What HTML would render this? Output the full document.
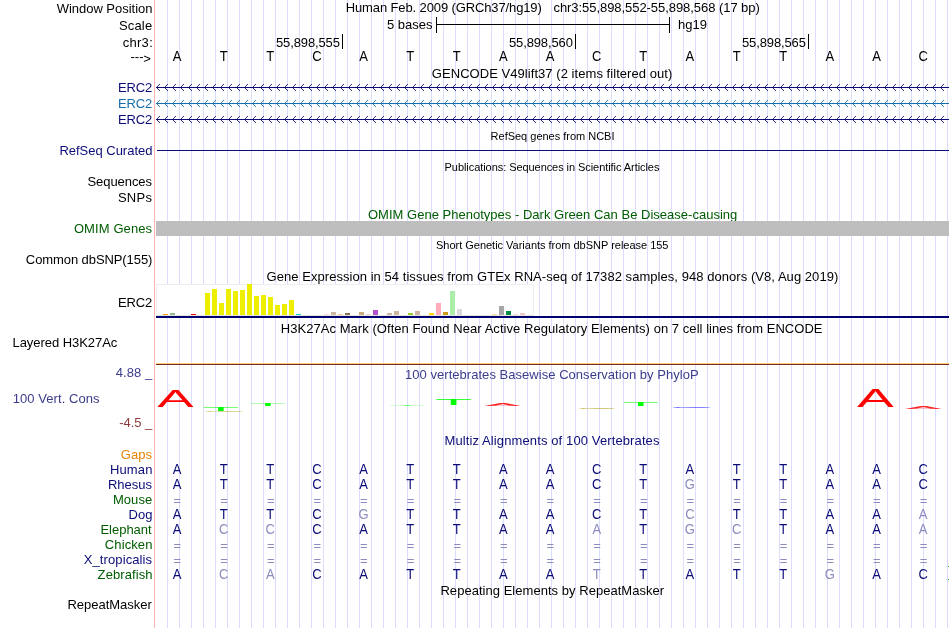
<!DOCTYPE html>
<html><head><meta charset="utf-8"><title>UCSC Genome Browser</title>
<style>
html,body{margin:0;padding:0;background:#fff;}
svg{display:block;font-family:"Liberation Sans", sans-serif;will-change:transform;}
</style></head><body>
<svg width="950" height="628" viewBox="0 0 950 628" shape-rendering="crispEdges">
<rect x="0" y="0" width="950" height="628" fill="#fff"/>
<rect x="167" y="0" width="1" height="628" fill="#dcdcff"/>
<rect x="179" y="0" width="1" height="628" fill="#dcdcff"/>
<rect x="191" y="0" width="1" height="628" fill="#dcdcff"/>
<rect x="203" y="0" width="1" height="628" fill="#dcdcff"/>
<rect x="215" y="0" width="1" height="628" fill="#dcdcff"/>
<rect x="227" y="0" width="1" height="628" fill="#dcdcff"/>
<rect x="239" y="0" width="1" height="628" fill="#dcdcff"/>
<rect x="251" y="0" width="1" height="628" fill="#dcdcff"/>
<rect x="263" y="0" width="1" height="628" fill="#dcdcff"/>
<rect x="275" y="0" width="1" height="628" fill="#dcdcff"/>
<rect x="287" y="0" width="1" height="628" fill="#dcdcff"/>
<rect x="299" y="0" width="1" height="628" fill="#dcdcff"/>
<rect x="311" y="0" width="1" height="628" fill="#dcdcff"/>
<rect x="323" y="0" width="1" height="628" fill="#dcdcff"/>
<rect x="335" y="0" width="1" height="628" fill="#dcdcff"/>
<rect x="347" y="0" width="1" height="628" fill="#dcdcff"/>
<rect x="359" y="0" width="1" height="628" fill="#dcdcff"/>
<rect x="371" y="0" width="1" height="628" fill="#dcdcff"/>
<rect x="383" y="0" width="1" height="628" fill="#dcdcff"/>
<rect x="395" y="0" width="1" height="628" fill="#dcdcff"/>
<rect x="407" y="0" width="1" height="628" fill="#dcdcff"/>
<rect x="419" y="0" width="1" height="628" fill="#dcdcff"/>
<rect x="431" y="0" width="1" height="628" fill="#dcdcff"/>
<rect x="443" y="0" width="1" height="628" fill="#dcdcff"/>
<rect x="455" y="0" width="1" height="628" fill="#dcdcff"/>
<rect x="467" y="0" width="1" height="628" fill="#dcdcff"/>
<rect x="479" y="0" width="1" height="628" fill="#dcdcff"/>
<rect x="491" y="0" width="1" height="628" fill="#dcdcff"/>
<rect x="503" y="0" width="1" height="628" fill="#dcdcff"/>
<rect x="515" y="0" width="1" height="628" fill="#dcdcff"/>
<rect x="527" y="0" width="1" height="628" fill="#dcdcff"/>
<rect x="539" y="0" width="1" height="628" fill="#dcdcff"/>
<rect x="551" y="0" width="1" height="628" fill="#dcdcff"/>
<rect x="563" y="0" width="1" height="628" fill="#dcdcff"/>
<rect x="575" y="0" width="1" height="628" fill="#dcdcff"/>
<rect x="587" y="0" width="1" height="628" fill="#dcdcff"/>
<rect x="599" y="0" width="1" height="628" fill="#dcdcff"/>
<rect x="611" y="0" width="1" height="628" fill="#dcdcff"/>
<rect x="623" y="0" width="1" height="628" fill="#dcdcff"/>
<rect x="635" y="0" width="1" height="628" fill="#dcdcff"/>
<rect x="647" y="0" width="1" height="628" fill="#dcdcff"/>
<rect x="659" y="0" width="1" height="628" fill="#dcdcff"/>
<rect x="671" y="0" width="1" height="628" fill="#dcdcff"/>
<rect x="683" y="0" width="1" height="628" fill="#dcdcff"/>
<rect x="695" y="0" width="1" height="628" fill="#dcdcff"/>
<rect x="707" y="0" width="1" height="628" fill="#dcdcff"/>
<rect x="719" y="0" width="1" height="628" fill="#dcdcff"/>
<rect x="731" y="0" width="1" height="628" fill="#dcdcff"/>
<rect x="743" y="0" width="1" height="628" fill="#dcdcff"/>
<rect x="755" y="0" width="1" height="628" fill="#dcdcff"/>
<rect x="767" y="0" width="1" height="628" fill="#dcdcff"/>
<rect x="779" y="0" width="1" height="628" fill="#dcdcff"/>
<rect x="791" y="0" width="1" height="628" fill="#dcdcff"/>
<rect x="803" y="0" width="1" height="628" fill="#dcdcff"/>
<rect x="815" y="0" width="1" height="628" fill="#dcdcff"/>
<rect x="827" y="0" width="1" height="628" fill="#dcdcff"/>
<rect x="839" y="0" width="1" height="628" fill="#dcdcff"/>
<rect x="851" y="0" width="1" height="628" fill="#dcdcff"/>
<rect x="863" y="0" width="1" height="628" fill="#dcdcff"/>
<rect x="875" y="0" width="1" height="628" fill="#dcdcff"/>
<rect x="887" y="0" width="1" height="628" fill="#dcdcff"/>
<rect x="899" y="0" width="1" height="628" fill="#dcdcff"/>
<rect x="911" y="0" width="1" height="628" fill="#dcdcff"/>
<rect x="923" y="0" width="1" height="628" fill="#dcdcff"/>
<rect x="935" y="0" width="1" height="628" fill="#dcdcff"/>
<rect x="947" y="0" width="1" height="628" fill="#dcdcff"/>
<rect x="154" y="0" width="1" height="628" fill="#ffb4b4"/>
<text x="56.65" y="12.8" font-size="13" text-anchor="start" fill="#000" textLength="95.80" lengthAdjust="spacing">Window Position</text>
<text x="118.9" y="29.6" font-size="13" text-anchor="start" fill="#000" textLength="33.27" lengthAdjust="spacing">Scale</text>
<text x="122.65" y="46.7" font-size="13" text-anchor="start" fill="#000" textLength="30.10" lengthAdjust="spacing">chr3:</text>
<text x="143.5" y="61.2" font-size="13" text-anchor="end" fill="#000">---</text>
<text x="150.8" y="62.6" font-size="13" text-anchor="end" fill="#000">&gt;</text>
<text x="345.75" y="11.9" font-size="13" text-anchor="start" fill="#000" textLength="196.04" lengthAdjust="spacing">Human Feb. 2009 (GRCh37/hg19)</text>
<text x="553.45" y="11.9" font-size="13" text-anchor="start" fill="#000" textLength="206.35" lengthAdjust="spacing">chr3:55,898,552-55,898,568 (17 bp)</text>
<text x="387.0" y="28.5" font-size="13" text-anchor="start" fill="#000" textLength="45.43" lengthAdjust="spacing">5 bases</text>
<rect x="437" y="24" width="233" height="1" fill="#000"/>
<rect x="436" y="17" width="1" height="16" fill="#000"/>
<rect x="669" y="17" width="1" height="16" fill="#000"/>
<text x="678.1" y="28.5" font-size="13" text-anchor="start" fill="#000" textLength="28.97" lengthAdjust="spacing">hg19</text>
<text x="276.0" y="46.8" font-size="13" text-anchor="start" fill="#000" textLength="63.91" lengthAdjust="spacing">55,898,555</text>
<rect x="342" y="34" width="1" height="15" fill="#000"/>
<text x="509.0" y="46.8" font-size="13" text-anchor="start" fill="#000" textLength="63.86" lengthAdjust="spacing">55,898,560</text>
<rect x="575" y="34" width="1" height="15" fill="#000"/>
<text x="742.0" y="46.8" font-size="13" text-anchor="start" fill="#000" textLength="63.91" lengthAdjust="spacing">55,898,565</text>
<rect x="808" y="34" width="1" height="15" fill="#000"/>
<text transform="translate(177.0 60.5) scale(1 1.08)" font-size="13" text-anchor="middle" fill="#000">A</text>
<text transform="translate(223.6 60.5) scale(1 1.08)" font-size="13" text-anchor="middle" fill="#000">T</text>
<text transform="translate(270.3 60.5) scale(1 1.08)" font-size="13" text-anchor="middle" fill="#000">T</text>
<text transform="translate(316.9 60.5) scale(1 1.08)" font-size="13" text-anchor="middle" fill="#000">C</text>
<text transform="translate(363.5 60.5) scale(1 1.08)" font-size="13" text-anchor="middle" fill="#000">A</text>
<text transform="translate(410.1 60.5) scale(1 1.08)" font-size="13" text-anchor="middle" fill="#000">T</text>
<text transform="translate(456.8 60.5) scale(1 1.08)" font-size="13" text-anchor="middle" fill="#000">T</text>
<text transform="translate(503.4 60.5) scale(1 1.08)" font-size="13" text-anchor="middle" fill="#000">A</text>
<text transform="translate(550.0 60.5) scale(1 1.08)" font-size="13" text-anchor="middle" fill="#000">A</text>
<text transform="translate(596.7 60.5) scale(1 1.08)" font-size="13" text-anchor="middle" fill="#000">C</text>
<text transform="translate(643.3 60.5) scale(1 1.08)" font-size="13" text-anchor="middle" fill="#000">T</text>
<text transform="translate(689.9 60.5) scale(1 1.08)" font-size="13" text-anchor="middle" fill="#000">A</text>
<text transform="translate(736.6 60.5) scale(1 1.08)" font-size="13" text-anchor="middle" fill="#000">T</text>
<text transform="translate(783.2 60.5) scale(1 1.08)" font-size="13" text-anchor="middle" fill="#000">T</text>
<text transform="translate(829.8 60.5) scale(1 1.08)" font-size="13" text-anchor="middle" fill="#000">A</text>
<text transform="translate(876.5 60.5) scale(1 1.08)" font-size="13" text-anchor="middle" fill="#000">A</text>
<text transform="translate(923.1 60.5) scale(1 1.08)" font-size="13" text-anchor="middle" fill="#000">C</text>
<text x="431.85" y="77.5" font-size="13" text-anchor="start" fill="#000" textLength="240.41" lengthAdjust="spacing">GENCODE V49lift37 (2 items filtered out)</text>
<text x="117.95" y="91.6" font-size="13" text-anchor="start" fill="#0c0c78" textLength="34.28" lengthAdjust="spacing">ERC2</text>
<rect x="156" y="87" width="793" height="1" fill="#0c0c78"/>
<path d="M160.0 84L156.5 87.5L160.0 91M168.0 84L164.5 87.5L168.0 91M176.0 84L172.5 87.5L176.0 91M184.0 84L180.5 87.5L184.0 91M192.0 84L188.5 87.5L192.0 91M200.0 84L196.5 87.5L200.0 91M208.0 84L204.5 87.5L208.0 91M216.0 84L212.5 87.5L216.0 91M224.0 84L220.5 87.5L224.0 91M232.0 84L228.5 87.5L232.0 91M240.0 84L236.5 87.5L240.0 91M248.0 84L244.5 87.5L248.0 91M256.0 84L252.5 87.5L256.0 91M264.0 84L260.5 87.5L264.0 91M272.0 84L268.5 87.5L272.0 91M280.0 84L276.5 87.5L280.0 91M288.0 84L284.5 87.5L288.0 91M296.0 84L292.5 87.5L296.0 91M304.0 84L300.5 87.5L304.0 91M312.0 84L308.5 87.5L312.0 91M320.0 84L316.5 87.5L320.0 91M328.0 84L324.5 87.5L328.0 91M336.0 84L332.5 87.5L336.0 91M344.0 84L340.5 87.5L344.0 91M352.0 84L348.5 87.5L352.0 91M360.0 84L356.5 87.5L360.0 91M368.0 84L364.5 87.5L368.0 91M376.0 84L372.5 87.5L376.0 91M384.0 84L380.5 87.5L384.0 91M392.0 84L388.5 87.5L392.0 91M400.0 84L396.5 87.5L400.0 91M408.0 84L404.5 87.5L408.0 91M416.0 84L412.5 87.5L416.0 91M424.0 84L420.5 87.5L424.0 91M432.0 84L428.5 87.5L432.0 91M440.0 84L436.5 87.5L440.0 91M448.0 84L444.5 87.5L448.0 91M456.0 84L452.5 87.5L456.0 91M464.0 84L460.5 87.5L464.0 91M472.0 84L468.5 87.5L472.0 91M480.0 84L476.5 87.5L480.0 91M488.0 84L484.5 87.5L488.0 91M496.0 84L492.5 87.5L496.0 91M504.0 84L500.5 87.5L504.0 91M512.0 84L508.5 87.5L512.0 91M520.0 84L516.5 87.5L520.0 91M528.0 84L524.5 87.5L528.0 91M536.0 84L532.5 87.5L536.0 91M544.0 84L540.5 87.5L544.0 91M552.0 84L548.5 87.5L552.0 91M560.0 84L556.5 87.5L560.0 91M568.0 84L564.5 87.5L568.0 91M576.0 84L572.5 87.5L576.0 91M584.0 84L580.5 87.5L584.0 91M592.0 84L588.5 87.5L592.0 91M600.0 84L596.5 87.5L600.0 91M608.0 84L604.5 87.5L608.0 91M616.0 84L612.5 87.5L616.0 91M624.0 84L620.5 87.5L624.0 91M632.0 84L628.5 87.5L632.0 91M640.0 84L636.5 87.5L640.0 91M648.0 84L644.5 87.5L648.0 91M656.0 84L652.5 87.5L656.0 91M664.0 84L660.5 87.5L664.0 91M672.0 84L668.5 87.5L672.0 91M680.0 84L676.5 87.5L680.0 91M688.0 84L684.5 87.5L688.0 91M696.0 84L692.5 87.5L696.0 91M704.0 84L700.5 87.5L704.0 91M712.0 84L708.5 87.5L712.0 91M720.0 84L716.5 87.5L720.0 91M728.0 84L724.5 87.5L728.0 91M736.0 84L732.5 87.5L736.0 91M744.0 84L740.5 87.5L744.0 91M752.0 84L748.5 87.5L752.0 91M760.0 84L756.5 87.5L760.0 91M768.0 84L764.5 87.5L768.0 91M776.0 84L772.5 87.5L776.0 91M784.0 84L780.5 87.5L784.0 91M792.0 84L788.5 87.5L792.0 91M800.0 84L796.5 87.5L800.0 91M808.0 84L804.5 87.5L808.0 91M816.0 84L812.5 87.5L816.0 91M824.0 84L820.5 87.5L824.0 91M832.0 84L828.5 87.5L832.0 91M840.0 84L836.5 87.5L840.0 91M848.0 84L844.5 87.5L848.0 91M856.0 84L852.5 87.5L856.0 91M864.0 84L860.5 87.5L864.0 91M872.0 84L868.5 87.5L872.0 91M880.0 84L876.5 87.5L880.0 91M888.0 84L884.5 87.5L888.0 91M896.0 84L892.5 87.5L896.0 91M904.0 84L900.5 87.5L904.0 91M912.0 84L908.5 87.5L912.0 91M920.0 84L916.5 87.5L920.0 91M928.0 84L924.5 87.5L928.0 91M936.0 84L932.5 87.5L936.0 91M944.0 84L940.5 87.5L944.0 91" fill="none" stroke="#0c0c78" stroke-width="0.85" shape-rendering="geometricPrecision"/>
<text x="117.95" y="107.6" font-size="13" text-anchor="start" fill="#1670b0" textLength="34.28" lengthAdjust="spacing">ERC2</text>
<rect x="156" y="103" width="793" height="1" fill="#1670b0"/>
<path d="M160.0 100L156.5 103.5L160.0 107M168.0 100L164.5 103.5L168.0 107M176.0 100L172.5 103.5L176.0 107M184.0 100L180.5 103.5L184.0 107M192.0 100L188.5 103.5L192.0 107M200.0 100L196.5 103.5L200.0 107M208.0 100L204.5 103.5L208.0 107M216.0 100L212.5 103.5L216.0 107M224.0 100L220.5 103.5L224.0 107M232.0 100L228.5 103.5L232.0 107M240.0 100L236.5 103.5L240.0 107M248.0 100L244.5 103.5L248.0 107M256.0 100L252.5 103.5L256.0 107M264.0 100L260.5 103.5L264.0 107M272.0 100L268.5 103.5L272.0 107M280.0 100L276.5 103.5L280.0 107M288.0 100L284.5 103.5L288.0 107M296.0 100L292.5 103.5L296.0 107M304.0 100L300.5 103.5L304.0 107M312.0 100L308.5 103.5L312.0 107M320.0 100L316.5 103.5L320.0 107M328.0 100L324.5 103.5L328.0 107M336.0 100L332.5 103.5L336.0 107M344.0 100L340.5 103.5L344.0 107M352.0 100L348.5 103.5L352.0 107M360.0 100L356.5 103.5L360.0 107M368.0 100L364.5 103.5L368.0 107M376.0 100L372.5 103.5L376.0 107M384.0 100L380.5 103.5L384.0 107M392.0 100L388.5 103.5L392.0 107M400.0 100L396.5 103.5L400.0 107M408.0 100L404.5 103.5L408.0 107M416.0 100L412.5 103.5L416.0 107M424.0 100L420.5 103.5L424.0 107M432.0 100L428.5 103.5L432.0 107M440.0 100L436.5 103.5L440.0 107M448.0 100L444.5 103.5L448.0 107M456.0 100L452.5 103.5L456.0 107M464.0 100L460.5 103.5L464.0 107M472.0 100L468.5 103.5L472.0 107M480.0 100L476.5 103.5L480.0 107M488.0 100L484.5 103.5L488.0 107M496.0 100L492.5 103.5L496.0 107M504.0 100L500.5 103.5L504.0 107M512.0 100L508.5 103.5L512.0 107M520.0 100L516.5 103.5L520.0 107M528.0 100L524.5 103.5L528.0 107M536.0 100L532.5 103.5L536.0 107M544.0 100L540.5 103.5L544.0 107M552.0 100L548.5 103.5L552.0 107M560.0 100L556.5 103.5L560.0 107M568.0 100L564.5 103.5L568.0 107M576.0 100L572.5 103.5L576.0 107M584.0 100L580.5 103.5L584.0 107M592.0 100L588.5 103.5L592.0 107M600.0 100L596.5 103.5L600.0 107M608.0 100L604.5 103.5L608.0 107M616.0 100L612.5 103.5L616.0 107M624.0 100L620.5 103.5L624.0 107M632.0 100L628.5 103.5L632.0 107M640.0 100L636.5 103.5L640.0 107M648.0 100L644.5 103.5L648.0 107M656.0 100L652.5 103.5L656.0 107M664.0 100L660.5 103.5L664.0 107M672.0 100L668.5 103.5L672.0 107M680.0 100L676.5 103.5L680.0 107M688.0 100L684.5 103.5L688.0 107M696.0 100L692.5 103.5L696.0 107M704.0 100L700.5 103.5L704.0 107M712.0 100L708.5 103.5L712.0 107M720.0 100L716.5 103.5L720.0 107M728.0 100L724.5 103.5L728.0 107M736.0 100L732.5 103.5L736.0 107M744.0 100L740.5 103.5L744.0 107M752.0 100L748.5 103.5L752.0 107M760.0 100L756.5 103.5L760.0 107M768.0 100L764.5 103.5L768.0 107M776.0 100L772.5 103.5L776.0 107M784.0 100L780.5 103.5L784.0 107M792.0 100L788.5 103.5L792.0 107M800.0 100L796.5 103.5L800.0 107M808.0 100L804.5 103.5L808.0 107M816.0 100L812.5 103.5L816.0 107M824.0 100L820.5 103.5L824.0 107M832.0 100L828.5 103.5L832.0 107M840.0 100L836.5 103.5L840.0 107M848.0 100L844.5 103.5L848.0 107M856.0 100L852.5 103.5L856.0 107M864.0 100L860.5 103.5L864.0 107M872.0 100L868.5 103.5L872.0 107M880.0 100L876.5 103.5L880.0 107M888.0 100L884.5 103.5L888.0 107M896.0 100L892.5 103.5L896.0 107M904.0 100L900.5 103.5L904.0 107M912.0 100L908.5 103.5L912.0 107M920.0 100L916.5 103.5L920.0 107M928.0 100L924.5 103.5L928.0 107M936.0 100L932.5 103.5L936.0 107M944.0 100L940.5 103.5L944.0 107" fill="none" stroke="#1670b0" stroke-width="0.85" shape-rendering="geometricPrecision"/>
<text x="117.95" y="123.6" font-size="13" text-anchor="start" fill="#0c0c78" textLength="34.28" lengthAdjust="spacing">ERC2</text>
<rect x="156" y="119" width="793" height="1" fill="#0c0c78"/>
<path d="M160.0 116L156.5 119.5L160.0 123M168.0 116L164.5 119.5L168.0 123M176.0 116L172.5 119.5L176.0 123M184.0 116L180.5 119.5L184.0 123M192.0 116L188.5 119.5L192.0 123M200.0 116L196.5 119.5L200.0 123M208.0 116L204.5 119.5L208.0 123M216.0 116L212.5 119.5L216.0 123M224.0 116L220.5 119.5L224.0 123M232.0 116L228.5 119.5L232.0 123M240.0 116L236.5 119.5L240.0 123M248.0 116L244.5 119.5L248.0 123M256.0 116L252.5 119.5L256.0 123M264.0 116L260.5 119.5L264.0 123M272.0 116L268.5 119.5L272.0 123M280.0 116L276.5 119.5L280.0 123M288.0 116L284.5 119.5L288.0 123M296.0 116L292.5 119.5L296.0 123M304.0 116L300.5 119.5L304.0 123M312.0 116L308.5 119.5L312.0 123M320.0 116L316.5 119.5L320.0 123M328.0 116L324.5 119.5L328.0 123M336.0 116L332.5 119.5L336.0 123M344.0 116L340.5 119.5L344.0 123M352.0 116L348.5 119.5L352.0 123M360.0 116L356.5 119.5L360.0 123M368.0 116L364.5 119.5L368.0 123M376.0 116L372.5 119.5L376.0 123M384.0 116L380.5 119.5L384.0 123M392.0 116L388.5 119.5L392.0 123M400.0 116L396.5 119.5L400.0 123M408.0 116L404.5 119.5L408.0 123M416.0 116L412.5 119.5L416.0 123M424.0 116L420.5 119.5L424.0 123M432.0 116L428.5 119.5L432.0 123M440.0 116L436.5 119.5L440.0 123M448.0 116L444.5 119.5L448.0 123M456.0 116L452.5 119.5L456.0 123M464.0 116L460.5 119.5L464.0 123M472.0 116L468.5 119.5L472.0 123M480.0 116L476.5 119.5L480.0 123M488.0 116L484.5 119.5L488.0 123M496.0 116L492.5 119.5L496.0 123M504.0 116L500.5 119.5L504.0 123M512.0 116L508.5 119.5L512.0 123M520.0 116L516.5 119.5L520.0 123M528.0 116L524.5 119.5L528.0 123M536.0 116L532.5 119.5L536.0 123M544.0 116L540.5 119.5L544.0 123M552.0 116L548.5 119.5L552.0 123M560.0 116L556.5 119.5L560.0 123M568.0 116L564.5 119.5L568.0 123M576.0 116L572.5 119.5L576.0 123M584.0 116L580.5 119.5L584.0 123M592.0 116L588.5 119.5L592.0 123M600.0 116L596.5 119.5L600.0 123M608.0 116L604.5 119.5L608.0 123M616.0 116L612.5 119.5L616.0 123M624.0 116L620.5 119.5L624.0 123M632.0 116L628.5 119.5L632.0 123M640.0 116L636.5 119.5L640.0 123M648.0 116L644.5 119.5L648.0 123M656.0 116L652.5 119.5L656.0 123M664.0 116L660.5 119.5L664.0 123M672.0 116L668.5 119.5L672.0 123M680.0 116L676.5 119.5L680.0 123M688.0 116L684.5 119.5L688.0 123M696.0 116L692.5 119.5L696.0 123M704.0 116L700.5 119.5L704.0 123M712.0 116L708.5 119.5L712.0 123M720.0 116L716.5 119.5L720.0 123M728.0 116L724.5 119.5L728.0 123M736.0 116L732.5 119.5L736.0 123M744.0 116L740.5 119.5L744.0 123M752.0 116L748.5 119.5L752.0 123M760.0 116L756.5 119.5L760.0 123M768.0 116L764.5 119.5L768.0 123M776.0 116L772.5 119.5L776.0 123M784.0 116L780.5 119.5L784.0 123M792.0 116L788.5 119.5L792.0 123M800.0 116L796.5 119.5L800.0 123M808.0 116L804.5 119.5L808.0 123M816.0 116L812.5 119.5L816.0 123M824.0 116L820.5 119.5L824.0 123M832.0 116L828.5 119.5L832.0 123M840.0 116L836.5 119.5L840.0 123M848.0 116L844.5 119.5L848.0 123M856.0 116L852.5 119.5L856.0 123M864.0 116L860.5 119.5L864.0 123M872.0 116L868.5 119.5L872.0 123M880.0 116L876.5 119.5L880.0 123M888.0 116L884.5 119.5L888.0 123M896.0 116L892.5 119.5L896.0 123M904.0 116L900.5 119.5L904.0 123M912.0 116L908.5 119.5L912.0 123M920.0 116L916.5 119.5L920.0 123M928.0 116L924.5 119.5L928.0 123M936.0 116L932.5 119.5L936.0 123M944.0 116L940.5 119.5L944.0 123" fill="none" stroke="#0c0c78" stroke-width="0.85" shape-rendering="geometricPrecision"/>
<text x="490.6" y="140" font-size="11" text-anchor="start" fill="#000" textLength="123.91" lengthAdjust="spacing">RefSeq genes from NCBI</text>
<text x="59.45" y="155" font-size="13" text-anchor="start" fill="#0c0c78" textLength="92.97" lengthAdjust="spacing">RefSeq Curated</text>
<rect x="157" y="150" width="792" height="1" fill="#0c0c78"/>
<text x="444.6" y="171" font-size="11" text-anchor="start" fill="#000" textLength="214.82" lengthAdjust="spacing">Publications: Sequences in Scientific Articles</text>
<text x="87.4" y="186" font-size="13" text-anchor="start" fill="#000" textLength="64.65" lengthAdjust="spacing">Sequences</text>
<text x="117.9" y="202" font-size="13" text-anchor="start" fill="#000" textLength="34.13" lengthAdjust="spacing">SNPs</text>
<text x="367.9" y="218.5" font-size="13" text-anchor="start" fill="#005c00" textLength="369.44" lengthAdjust="spacing">OMIM Gene Phenotypes - Dark Green Can Be Disease-causing</text>
<text x="73.9" y="233" font-size="13" text-anchor="start" fill="#005c00" textLength="78.14" lengthAdjust="spacing">OMIM Genes</text>
<rect x="156" y="221" width="793" height="15" fill="#bebebe"/>
<text x="436.0" y="249" font-size="11" text-anchor="start" fill="#000" textLength="232.47" lengthAdjust="spacing">Short Genetic Variants from dbSNP release 155</text>
<text x="25.85" y="263.5" font-size="13" text-anchor="start" fill="#000" textLength="126.53" lengthAdjust="spacing">Common dbSNP(155)</text>
<text x="266.55" y="280.5" font-size="13" text-anchor="start" fill="#000" textLength="571.73" lengthAdjust="spacing">Gene Expression in 54 tissues from GTEx RNA-seq of 17382 samples, 948 donors (V8, Aug 2019)</text>
<text x="117.95" y="307" font-size="13" text-anchor="start" fill="#000" textLength="34.28" lengthAdjust="spacing">ERC2</text>
<rect x="156" y="284" width="378" height="32" fill="#eeeeee"/>
<rect x="157" y="285" width="376" height="30" fill="#fff"/>
<rect x="156" y="315" width="378" height="1" fill="#e6e6dc"/>
<rect x="163" y="314" width="5" height="1" fill="#f5a00a"/>
<rect x="170" y="313" width="5" height="2" fill="#8fbc8f"/>
<rect x="191" y="314" width="5" height="1" fill="#ff0000"/>
<rect x="205" y="293" width="5" height="22" fill="#eeee00"/>
<rect x="212" y="289" width="5" height="26" fill="#eeee00"/>
<rect x="219" y="303" width="5" height="12" fill="#eeee00"/>
<rect x="226" y="289" width="5" height="26" fill="#eeee00"/>
<rect x="233" y="291" width="5" height="24" fill="#eeee00"/>
<rect x="240" y="290" width="5" height="25" fill="#eeee00"/>
<rect x="247" y="284" width="5" height="31" fill="#eeee00"/>
<rect x="254" y="296" width="5" height="19" fill="#eeee00"/>
<rect x="261" y="295" width="5" height="20" fill="#eeee00"/>
<rect x="268" y="297" width="5" height="18" fill="#eeee00"/>
<rect x="275" y="305" width="5" height="10" fill="#eeee00"/>
<rect x="282" y="304" width="5" height="11" fill="#eeee00"/>
<rect x="289" y="300" width="5" height="15" fill="#eeee00"/>
<rect x="296" y="314" width="5" height="1" fill="#00cdcd"/>
<rect x="324" y="314" width="5" height="1" fill="#ffd7d7"/>
<rect x="331" y="312" width="5" height="3" fill="#cdb79e"/>
<rect x="338" y="314" width="5" height="1" fill="#f5c896"/>
<rect x="345" y="313" width="5" height="2" fill="#8b7355"/>
<rect x="359" y="312" width="5" height="3" fill="#cdaa7d"/>
<rect x="366" y="314" width="5" height="1" fill="#ffd2d2"/>
<rect x="373" y="310" width="5" height="5" fill="#b452cd"/>
<rect x="387" y="313" width="5" height="2" fill="#cdb79e"/>
<rect x="394" y="311" width="5" height="4" fill="#cdb79e"/>
<rect x="408" y="313" width="5" height="2" fill="#9acd32"/>
<rect x="415" y="311" width="5" height="4" fill="#cdb79e"/>
<rect x="429" y="313" width="5" height="2" fill="#ffd700"/>
<rect x="436" y="303" width="5" height="12" fill="#ffaeb9"/>
<rect x="443" y="312" width="5" height="3" fill="#cd9b1d"/>
<rect x="450" y="291" width="5" height="24" fill="#aaeeaa"/>
<rect x="457" y="309" width="5" height="6" fill="#d9d9d9"/>
<rect x="492" y="314" width="5" height="1" fill="#ffd39b"/>
<rect x="499" y="306" width="5" height="9" fill="#a6a6a6"/>
<rect x="506" y="311" width="5" height="4" fill="#008b45"/>
<rect x="513" y="314" width="5" height="1" fill="#ffd7d7"/>
<rect x="520" y="313" width="5" height="2" fill="#f0c8c8"/>
<rect x="156" y="316" width="793" height="2" fill="#000070"/>
<text x="280.75" y="332.9" font-size="13" text-anchor="start" fill="#000" textLength="541.79" lengthAdjust="spacing">H3K27Ac Mark (Often Found Near Active Regulatory Elements) on 7 cell lines from ENCODE</text>
<text x="12.45" y="346.8" font-size="13" text-anchor="start" fill="#000" textLength="104.91" lengthAdjust="spacing">Layered H3K27Ac</text>
<rect x="156" y="363" width="793" height="1" fill="#ffd070"/>
<rect x="156" y="364" width="793" height="1" fill="#782828"/>
<text x="405.0" y="378.5" font-size="13" text-anchor="start" fill="#3c3c8c" textLength="293.68" lengthAdjust="spacing">100 vertebrates Basewise Conservation by PhyloP</text>
<text x="115.7" y="377.3" font-size="13" text-anchor="start" fill="#3c3c8c" textLength="36.54" lengthAdjust="spacing">4.88 _</text>
<text x="12.8" y="402.5" font-size="13" text-anchor="start" fill="#3c3c8c" textLength="86.65" lengthAdjust="spacing">100 Vert. Cons</text>
<text x="119.25" y="427.2" font-size="13" text-anchor="start" fill="#8c3c3c" textLength="32.99" lengthAdjust="spacing">-4.5 _</text>
<text transform="translate(157.186 407.000) scale(2.2704 1.0174)" x="0" y="0" font-size="24.0" fill="#ff0000" opacity="1" shape-rendering="geometricPrecision">A</text>
<text transform="translate(202.204 411.000) scale(2.5387 0.2422)" x="0" y="0" font-size="24.0" fill="#00ff00" opacity="1" shape-rendering="geometricPrecision">T</text>
<text transform="translate(202.134 412.374) scale(2.3885 0.0938)" x="0" y="0" font-size="24.0" fill="#a89800" opacity="0.8" shape-rendering="geometricPrecision">G</text>
<text transform="translate(249.636 406.000) scale(2.4797 0.1817)" x="0" y="0" font-size="24.0" fill="#00ff00" opacity="1" shape-rendering="geometricPrecision">T</text>
<text transform="translate(389.120 405.500) scale(2.5092 0.0606)" x="0" y="0" font-size="24.0" fill="#00ff00" opacity="0.6" shape-rendering="geometricPrecision">T</text>
<text transform="translate(435.100 405.000) scale(2.5461 0.3937)" x="0" y="0" font-size="24.0" fill="#00ff00" opacity="1" shape-rendering="geometricPrecision">T</text>
<text transform="translate(484.387 405.750) scale(2.2642 0.1120)" x="0" y="0" font-size="24.0" fill="#ff0000" opacity="0.85" shape-rendering="geometricPrecision">A</text>
<text transform="translate(576.279 408.873) scale(2.2675 0.0996)" x="0" y="0" font-size="24.0" fill="#a89800" opacity="1" shape-rendering="geometricPrecision">G</text>
<text transform="translate(622.428 405.800) scale(2.4945 0.2301)" x="0" y="0" font-size="24.0" fill="#00ff00" opacity="1" shape-rendering="geometricPrecision">T</text>
<text transform="translate(669.984 408.081) scale(2.5132 0.0703)" x="0" y="0" font-size="24.0" fill="#0000ff" opacity="1" shape-rendering="geometricPrecision">C</text>
<text transform="translate(857.085 407.400) scale(2.3019 1.0417)" x="0" y="0" font-size="24.0" fill="#ff0000" opacity="1" shape-rendering="geometricPrecision">A</text>
<text transform="translate(904.885 409.050) scale(2.2956 0.1120)" x="0" y="0" font-size="24.0" fill="#ff0000" opacity="0.85" shape-rendering="geometricPrecision">A</text>
<text x="444.45" y="444.5" font-size="13" text-anchor="start" fill="#0c0c78" textLength="215.00" lengthAdjust="spacing">Multiz Alignments of 100 Vertebrates</text>
<text x="120.85" y="458.5" font-size="13" text-anchor="start" fill="#e8820a" textLength="31.22" lengthAdjust="spacing">Gaps</text>
<text x="109.95" y="473.5" font-size="13" text-anchor="start" fill="#0c0c78" textLength="42.46" lengthAdjust="spacing">Human</text>
<text transform="translate(177.0 473.5) scale(1 1.08)" font-size="13" text-anchor="middle" fill="#0c0c78">A</text>
<text transform="translate(223.6 473.5) scale(1 1.08)" font-size="13" text-anchor="middle" fill="#0c0c78">T</text>
<text transform="translate(270.3 473.5) scale(1 1.08)" font-size="13" text-anchor="middle" fill="#0c0c78">T</text>
<text transform="translate(316.9 473.5) scale(1 1.08)" font-size="13" text-anchor="middle" fill="#0c0c78">C</text>
<text transform="translate(363.5 473.5) scale(1 1.08)" font-size="13" text-anchor="middle" fill="#0c0c78">A</text>
<text transform="translate(410.1 473.5) scale(1 1.08)" font-size="13" text-anchor="middle" fill="#0c0c78">T</text>
<text transform="translate(456.8 473.5) scale(1 1.08)" font-size="13" text-anchor="middle" fill="#0c0c78">T</text>
<text transform="translate(503.4 473.5) scale(1 1.08)" font-size="13" text-anchor="middle" fill="#0c0c78">A</text>
<text transform="translate(550.0 473.5) scale(1 1.08)" font-size="13" text-anchor="middle" fill="#0c0c78">A</text>
<text transform="translate(596.7 473.5) scale(1 1.08)" font-size="13" text-anchor="middle" fill="#0c0c78">C</text>
<text transform="translate(643.3 473.5) scale(1 1.08)" font-size="13" text-anchor="middle" fill="#0c0c78">T</text>
<text transform="translate(689.9 473.5) scale(1 1.08)" font-size="13" text-anchor="middle" fill="#0c0c78">A</text>
<text transform="translate(736.6 473.5) scale(1 1.08)" font-size="13" text-anchor="middle" fill="#0c0c78">T</text>
<text transform="translate(783.2 473.5) scale(1 1.08)" font-size="13" text-anchor="middle" fill="#0c0c78">T</text>
<text transform="translate(829.8 473.5) scale(1 1.08)" font-size="13" text-anchor="middle" fill="#0c0c78">A</text>
<text transform="translate(876.5 473.5) scale(1 1.08)" font-size="13" text-anchor="middle" fill="#0c0c78">A</text>
<text transform="translate(923.1 473.5) scale(1 1.08)" font-size="13" text-anchor="middle" fill="#0c0c78">C</text>
<text x="107.95" y="488.5" font-size="13" text-anchor="start" fill="#0c0c78" textLength="44.08" lengthAdjust="spacing">Rhesus</text>
<text transform="translate(177.0 488.5) scale(1 1.08)" font-size="13" text-anchor="middle" fill="#0c0c78">A</text>
<text transform="translate(223.6 488.5) scale(1 1.08)" font-size="13" text-anchor="middle" fill="#0c0c78">T</text>
<text transform="translate(270.3 488.5) scale(1 1.08)" font-size="13" text-anchor="middle" fill="#0c0c78">T</text>
<text transform="translate(316.9 488.5) scale(1 1.08)" font-size="13" text-anchor="middle" fill="#0c0c78">C</text>
<text transform="translate(363.5 488.5) scale(1 1.08)" font-size="13" text-anchor="middle" fill="#0c0c78">A</text>
<text transform="translate(410.1 488.5) scale(1 1.08)" font-size="13" text-anchor="middle" fill="#0c0c78">T</text>
<text transform="translate(456.8 488.5) scale(1 1.08)" font-size="13" text-anchor="middle" fill="#0c0c78">T</text>
<text transform="translate(503.4 488.5) scale(1 1.08)" font-size="13" text-anchor="middle" fill="#0c0c78">A</text>
<text transform="translate(550.0 488.5) scale(1 1.08)" font-size="13" text-anchor="middle" fill="#0c0c78">A</text>
<text transform="translate(596.7 488.5) scale(1 1.08)" font-size="13" text-anchor="middle" fill="#0c0c78">C</text>
<text transform="translate(643.3 488.5) scale(1 1.08)" font-size="13" text-anchor="middle" fill="#0c0c78">T</text>
<text transform="translate(689.9 488.5) scale(1 1.08)" font-size="13" text-anchor="middle" fill="#8c8cbe">G</text>
<text transform="translate(736.6 488.5) scale(1 1.08)" font-size="13" text-anchor="middle" fill="#0c0c78">T</text>
<text transform="translate(783.2 488.5) scale(1 1.08)" font-size="13" text-anchor="middle" fill="#0c0c78">T</text>
<text transform="translate(829.8 488.5) scale(1 1.08)" font-size="13" text-anchor="middle" fill="#0c0c78">A</text>
<text transform="translate(876.5 488.5) scale(1 1.08)" font-size="13" text-anchor="middle" fill="#0c0c78">A</text>
<text transform="translate(923.1 488.5) scale(1 1.08)" font-size="13" text-anchor="middle" fill="#0c0c78">C</text>
<text x="112.95" y="503.5" font-size="13" text-anchor="start" fill="#005c00" textLength="39.22" lengthAdjust="spacing">Mouse</text>
<text x="177.4" y="505.1" font-size="13" text-anchor="middle" fill="#8c8cbe">=</text>
<text x="224.0" y="505.1" font-size="13" text-anchor="middle" fill="#8c8cbe">=</text>
<text x="270.7" y="505.1" font-size="13" text-anchor="middle" fill="#8c8cbe">=</text>
<text x="317.3" y="505.1" font-size="13" text-anchor="middle" fill="#8c8cbe">=</text>
<text x="363.9" y="505.1" font-size="13" text-anchor="middle" fill="#8c8cbe">=</text>
<text x="410.5" y="505.1" font-size="13" text-anchor="middle" fill="#8c8cbe">=</text>
<text x="457.2" y="505.1" font-size="13" text-anchor="middle" fill="#8c8cbe">=</text>
<text x="503.8" y="505.1" font-size="13" text-anchor="middle" fill="#8c8cbe">=</text>
<text x="550.4" y="505.1" font-size="13" text-anchor="middle" fill="#8c8cbe">=</text>
<text x="597.1" y="505.1" font-size="13" text-anchor="middle" fill="#8c8cbe">=</text>
<text x="643.7" y="505.1" font-size="13" text-anchor="middle" fill="#8c8cbe">=</text>
<text x="690.3" y="505.1" font-size="13" text-anchor="middle" fill="#8c8cbe">=</text>
<text x="737.0" y="505.1" font-size="13" text-anchor="middle" fill="#8c8cbe">=</text>
<text x="783.6" y="505.1" font-size="13" text-anchor="middle" fill="#8c8cbe">=</text>
<text x="830.2" y="505.1" font-size="13" text-anchor="middle" fill="#8c8cbe">=</text>
<text x="876.9" y="505.1" font-size="13" text-anchor="middle" fill="#8c8cbe">=</text>
<text x="923.5" y="505.1" font-size="13" text-anchor="middle" fill="#8c8cbe">=</text>
<text x="128.45" y="518.5" font-size="13" text-anchor="start" fill="#0c0c78" textLength="24.00" lengthAdjust="spacing">Dog</text>
<text transform="translate(177.0 518.5) scale(1 1.08)" font-size="13" text-anchor="middle" fill="#0c0c78">A</text>
<text transform="translate(223.6 518.5) scale(1 1.08)" font-size="13" text-anchor="middle" fill="#0c0c78">T</text>
<text transform="translate(270.3 518.5) scale(1 1.08)" font-size="13" text-anchor="middle" fill="#0c0c78">T</text>
<text transform="translate(316.9 518.5) scale(1 1.08)" font-size="13" text-anchor="middle" fill="#0c0c78">C</text>
<text transform="translate(363.5 518.5) scale(1 1.08)" font-size="13" text-anchor="middle" fill="#8c8cbe">G</text>
<text transform="translate(410.1 518.5) scale(1 1.08)" font-size="13" text-anchor="middle" fill="#0c0c78">T</text>
<text transform="translate(456.8 518.5) scale(1 1.08)" font-size="13" text-anchor="middle" fill="#0c0c78">T</text>
<text transform="translate(503.4 518.5) scale(1 1.08)" font-size="13" text-anchor="middle" fill="#0c0c78">A</text>
<text transform="translate(550.0 518.5) scale(1 1.08)" font-size="13" text-anchor="middle" fill="#0c0c78">A</text>
<text transform="translate(596.7 518.5) scale(1 1.08)" font-size="13" text-anchor="middle" fill="#0c0c78">C</text>
<text transform="translate(643.3 518.5) scale(1 1.08)" font-size="13" text-anchor="middle" fill="#0c0c78">T</text>
<text transform="translate(689.9 518.5) scale(1 1.08)" font-size="13" text-anchor="middle" fill="#8c8cbe">C</text>
<text transform="translate(736.6 518.5) scale(1 1.08)" font-size="13" text-anchor="middle" fill="#0c0c78">T</text>
<text transform="translate(783.2 518.5) scale(1 1.08)" font-size="13" text-anchor="middle" fill="#0c0c78">T</text>
<text transform="translate(829.8 518.5) scale(1 1.08)" font-size="13" text-anchor="middle" fill="#0c0c78">A</text>
<text transform="translate(876.5 518.5) scale(1 1.08)" font-size="13" text-anchor="middle" fill="#0c0c78">A</text>
<text transform="translate(923.1 518.5) scale(1 1.08)" font-size="13" text-anchor="middle" fill="#8c8cbe">A</text>
<text x="100.45" y="533.5" font-size="13" text-anchor="start" fill="#005c00" textLength="51.22" lengthAdjust="spacing">Elephant</text>
<text transform="translate(177.0 533.5) scale(1 1.08)" font-size="13" text-anchor="middle" fill="#0c0c78">A</text>
<text transform="translate(223.6 533.5) scale(1 1.08)" font-size="13" text-anchor="middle" fill="#8c8cbe">C</text>
<text transform="translate(270.3 533.5) scale(1 1.08)" font-size="13" text-anchor="middle" fill="#8c8cbe">C</text>
<text transform="translate(316.9 533.5) scale(1 1.08)" font-size="13" text-anchor="middle" fill="#0c0c78">C</text>
<text transform="translate(363.5 533.5) scale(1 1.08)" font-size="13" text-anchor="middle" fill="#0c0c78">A</text>
<text transform="translate(410.1 533.5) scale(1 1.08)" font-size="13" text-anchor="middle" fill="#0c0c78">T</text>
<text transform="translate(456.8 533.5) scale(1 1.08)" font-size="13" text-anchor="middle" fill="#0c0c78">T</text>
<text transform="translate(503.4 533.5) scale(1 1.08)" font-size="13" text-anchor="middle" fill="#0c0c78">A</text>
<text transform="translate(550.0 533.5) scale(1 1.08)" font-size="13" text-anchor="middle" fill="#0c0c78">A</text>
<text transform="translate(596.7 533.5) scale(1 1.08)" font-size="13" text-anchor="middle" fill="#8c8cbe">A</text>
<text transform="translate(643.3 533.5) scale(1 1.08)" font-size="13" text-anchor="middle" fill="#0c0c78">T</text>
<text transform="translate(689.9 533.5) scale(1 1.08)" font-size="13" text-anchor="middle" fill="#8c8cbe">G</text>
<text transform="translate(736.6 533.5) scale(1 1.08)" font-size="13" text-anchor="middle" fill="#8c8cbe">C</text>
<text transform="translate(783.2 533.5) scale(1 1.08)" font-size="13" text-anchor="middle" fill="#0c0c78">T</text>
<text transform="translate(829.8 533.5) scale(1 1.08)" font-size="13" text-anchor="middle" fill="#0c0c78">A</text>
<text transform="translate(876.5 533.5) scale(1 1.08)" font-size="13" text-anchor="middle" fill="#0c0c78">A</text>
<text transform="translate(923.1 533.5) scale(1 1.08)" font-size="13" text-anchor="middle" fill="#8c8cbe">A</text>
<text x="104.85" y="548.5" font-size="13" text-anchor="start" fill="#005c00" textLength="47.57" lengthAdjust="spacing">Chicken</text>
<text x="177.4" y="550.1" font-size="13" text-anchor="middle" fill="#8c8cbe">=</text>
<text x="224.0" y="550.1" font-size="13" text-anchor="middle" fill="#8c8cbe">=</text>
<text x="270.7" y="550.1" font-size="13" text-anchor="middle" fill="#8c8cbe">=</text>
<text x="317.3" y="550.1" font-size="13" text-anchor="middle" fill="#8c8cbe">=</text>
<text x="363.9" y="550.1" font-size="13" text-anchor="middle" fill="#8c8cbe">=</text>
<text x="410.5" y="550.1" font-size="13" text-anchor="middle" fill="#8c8cbe">=</text>
<text x="457.2" y="550.1" font-size="13" text-anchor="middle" fill="#8c8cbe">=</text>
<text x="503.8" y="550.1" font-size="13" text-anchor="middle" fill="#8c8cbe">=</text>
<text x="550.4" y="550.1" font-size="13" text-anchor="middle" fill="#8c8cbe">=</text>
<text x="597.1" y="550.1" font-size="13" text-anchor="middle" fill="#8c8cbe">=</text>
<text x="643.7" y="550.1" font-size="13" text-anchor="middle" fill="#8c8cbe">=</text>
<text x="690.3" y="550.1" font-size="13" text-anchor="middle" fill="#8c8cbe">=</text>
<text x="737.0" y="550.1" font-size="13" text-anchor="middle" fill="#8c8cbe">=</text>
<text x="783.6" y="550.1" font-size="13" text-anchor="middle" fill="#8c8cbe">=</text>
<text x="830.2" y="550.1" font-size="13" text-anchor="middle" fill="#8c8cbe">=</text>
<text x="876.9" y="550.1" font-size="13" text-anchor="middle" fill="#8c8cbe">=</text>
<text x="923.5" y="550.1" font-size="13" text-anchor="middle" fill="#8c8cbe">=</text>
<text x="83.7" y="563.5" font-size="13" text-anchor="start" fill="#0c0c78" textLength="68.35" lengthAdjust="spacing">X_tropicalis</text>
<text x="177.4" y="565.1" font-size="13" text-anchor="middle" fill="#8c8cbe">=</text>
<text x="224.0" y="565.1" font-size="13" text-anchor="middle" fill="#8c8cbe">=</text>
<text x="270.7" y="565.1" font-size="13" text-anchor="middle" fill="#8c8cbe">=</text>
<text x="317.3" y="565.1" font-size="13" text-anchor="middle" fill="#8c8cbe">=</text>
<text x="363.9" y="565.1" font-size="13" text-anchor="middle" fill="#8c8cbe">=</text>
<text x="410.5" y="565.1" font-size="13" text-anchor="middle" fill="#8c8cbe">=</text>
<text x="457.2" y="565.1" font-size="13" text-anchor="middle" fill="#8c8cbe">=</text>
<text x="503.8" y="565.1" font-size="13" text-anchor="middle" fill="#8c8cbe">=</text>
<text x="550.4" y="565.1" font-size="13" text-anchor="middle" fill="#8c8cbe">=</text>
<text x="597.1" y="565.1" font-size="13" text-anchor="middle" fill="#8c8cbe">=</text>
<text x="643.7" y="565.1" font-size="13" text-anchor="middle" fill="#8c8cbe">=</text>
<text x="690.3" y="565.1" font-size="13" text-anchor="middle" fill="#8c8cbe">=</text>
<text x="737.0" y="565.1" font-size="13" text-anchor="middle" fill="#8c8cbe">=</text>
<text x="783.6" y="565.1" font-size="13" text-anchor="middle" fill="#8c8cbe">=</text>
<text x="830.2" y="565.1" font-size="13" text-anchor="middle" fill="#8c8cbe">=</text>
<text x="876.9" y="565.1" font-size="13" text-anchor="middle" fill="#8c8cbe">=</text>
<text x="923.5" y="565.1" font-size="13" text-anchor="middle" fill="#8c8cbe">=</text>
<text x="97.6" y="578.5" font-size="13" text-anchor="start" fill="#005c00" textLength="54.84" lengthAdjust="spacing">Zebrafish</text>
<text transform="translate(177.0 578.5) scale(1 1.08)" font-size="13" text-anchor="middle" fill="#0c0c78">A</text>
<text transform="translate(223.6 578.5) scale(1 1.08)" font-size="13" text-anchor="middle" fill="#8c8cbe">C</text>
<text transform="translate(270.3 578.5) scale(1 1.08)" font-size="13" text-anchor="middle" fill="#8c8cbe">A</text>
<text transform="translate(316.9 578.5) scale(1 1.08)" font-size="13" text-anchor="middle" fill="#0c0c78">C</text>
<text transform="translate(363.5 578.5) scale(1 1.08)" font-size="13" text-anchor="middle" fill="#0c0c78">A</text>
<text transform="translate(410.1 578.5) scale(1 1.08)" font-size="13" text-anchor="middle" fill="#0c0c78">T</text>
<text transform="translate(456.8 578.5) scale(1 1.08)" font-size="13" text-anchor="middle" fill="#0c0c78">T</text>
<text transform="translate(503.4 578.5) scale(1 1.08)" font-size="13" text-anchor="middle" fill="#0c0c78">A</text>
<text transform="translate(550.0 578.5) scale(1 1.08)" font-size="13" text-anchor="middle" fill="#0c0c78">A</text>
<text transform="translate(596.7 578.5) scale(1 1.08)" font-size="13" text-anchor="middle" fill="#8c8cbe">T</text>
<text transform="translate(643.3 578.5) scale(1 1.08)" font-size="13" text-anchor="middle" fill="#0c0c78">T</text>
<text transform="translate(689.9 578.5) scale(1 1.08)" font-size="13" text-anchor="middle" fill="#0c0c78">A</text>
<text transform="translate(736.6 578.5) scale(1 1.08)" font-size="13" text-anchor="middle" fill="#0c0c78">T</text>
<text transform="translate(783.2 578.5) scale(1 1.08)" font-size="13" text-anchor="middle" fill="#0c0c78">T</text>
<text transform="translate(829.8 578.5) scale(1 1.08)" font-size="13" text-anchor="middle" fill="#8c8cbe">G</text>
<text transform="translate(876.5 578.5) scale(1 1.08)" font-size="13" text-anchor="middle" fill="#0c0c78">A</text>
<text transform="translate(923.1 578.5) scale(1 1.08)" font-size="13" text-anchor="middle" fill="#0c0c78">C</text>
<rect x="948" y="566" width="1" height="1" fill="#00c800"/>
<rect x="948" y="579" width="1" height="1" fill="#00c800"/>
<text x="440.45" y="594.5" font-size="13" text-anchor="start" fill="#000" textLength="223.71" lengthAdjust="spacing">Repeating Elements by RepeatMasker</text>
<text x="67.45" y="608.5" font-size="13" text-anchor="start" fill="#000" textLength="84.34" lengthAdjust="spacing">RepeatMasker</text>
</svg></body></html>
